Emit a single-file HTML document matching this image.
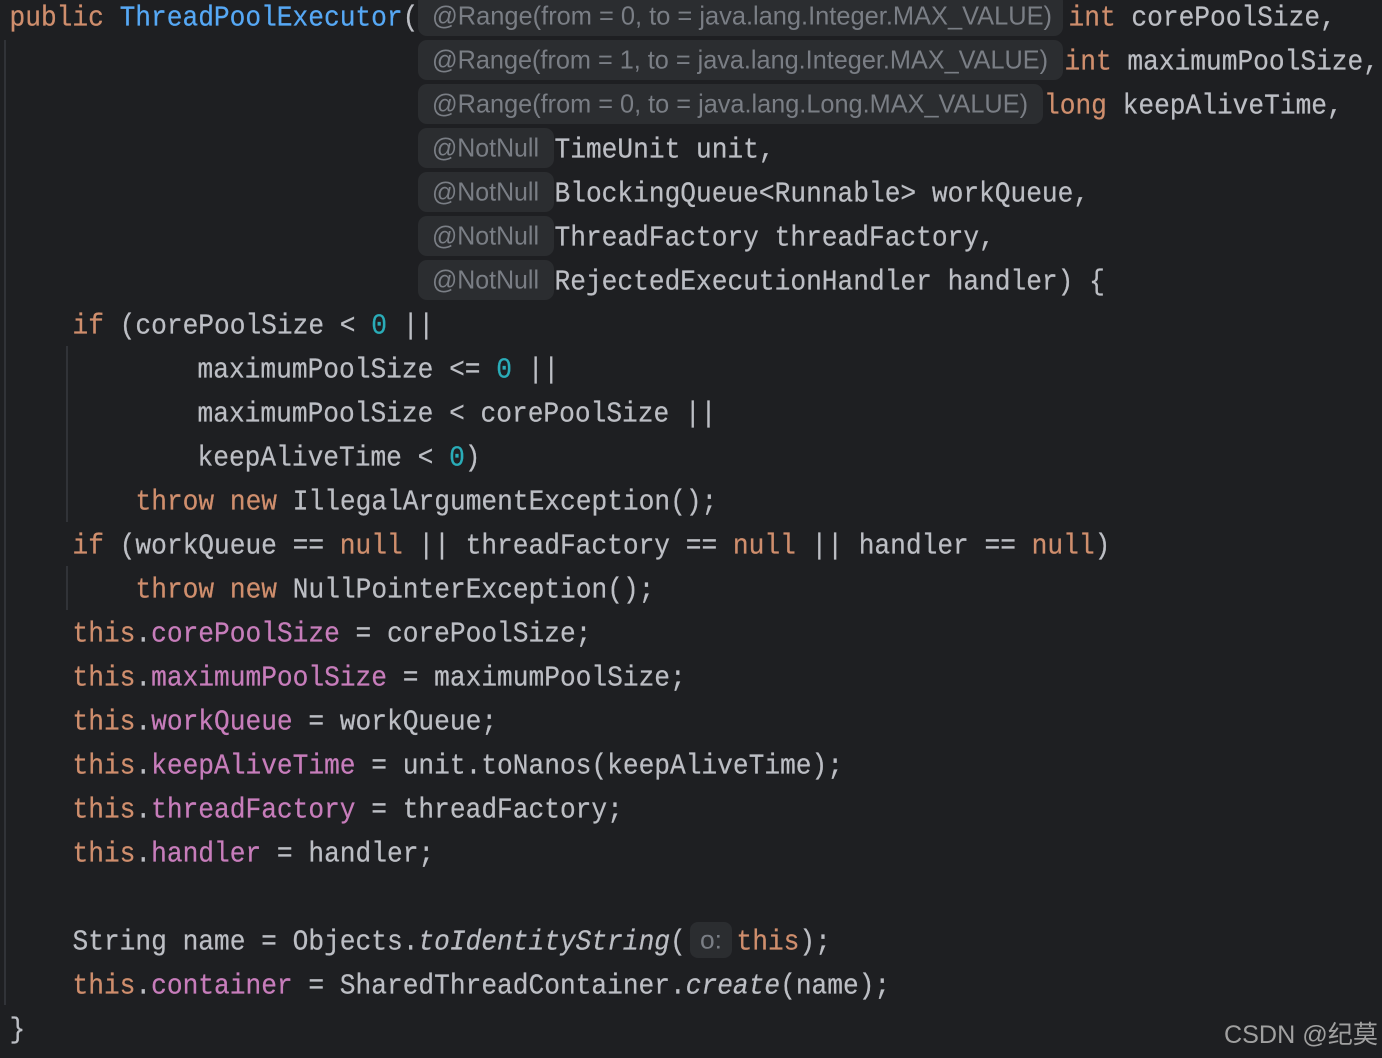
<!DOCTYPE html>
<html>
<head>
<meta charset="utf-8">
<style>
html,body{margin:0;padding:0;background:#1e1f22;width:1382px;height:1058px;overflow:hidden}
svg{position:absolute;left:0;top:0;display:block}
.m{font-family:"Liberation Mono",monospace;font-size:29px;fill:#bcbec4;stroke:#bcbec4;stroke-width:.25px;white-space:pre}
.k{fill:#cf8e6d;stroke:#cf8e6d}.f{fill:#c77dbb;stroke:#c77dbb}.n{fill:#2aacb8;stroke:#2aacb8}.b{fill:#56a8f5;stroke:#56a8f5}.i{font-style:italic}
.h{font-family:"Liberation Sans",sans-serif;font-size:26px;fill:#7a7e85;white-space:pre}
.p{fill:#2b2d30}
.g{fill:#313338}
.w{font-family:"Liberation Sans","Noto Sans CJK SC",sans-serif;font-size:25px;fill:#a0a0a0}
</style>
</head>
<body>
<svg width="1382" height="1058" viewBox="0 0 1382 1058" xmlns="http://www.w3.org/2000/svg">
<rect class="g" x="4" y="40" width="2" height="965"/>
<rect class="g" x="66" y="346" width="2" height="176"/>
<rect class="g" x="66" y="566" width="2" height="44"/>

<rect class="p" x="418" y="-8" width="645" height="44" rx="9"/>
<rect class="p" x="418" y="40" width="645" height="40" rx="9"/>
<rect class="p" x="418" y="84" width="625" height="40" rx="9"/>
<rect class="p" x="418" y="128" width="136" height="40" rx="9"/>
<rect class="p" x="418" y="172" width="136" height="40" rx="9"/>
<rect class="p" x="418" y="216" width="136" height="40" rx="9"/>
<rect class="p" x="418" y="260" width="136" height="40" rx="9"/>
<rect class="p" x="690" y="922" width="42" height="36" rx="8"/>

<text class="h" x="432" y="24.5" textLength="620" lengthAdjust="spacingAndGlyphs">@Range(from = 0, to = java.lang.Integer.MAX_VALUE)</text>
<text class="h" x="432" y="68.5" textLength="616" lengthAdjust="spacingAndGlyphs">@Range(from = 1, to = java.lang.Integer.MAX_VALUE)</text>
<text class="h" x="432" y="112.5" textLength="596" lengthAdjust="spacingAndGlyphs">@Range(from = 0, to = java.lang.Long.MAX_VALUE)</text>
<text class="h" x="432" y="156.5" textLength="107" lengthAdjust="spacingAndGlyphs">@NotNull</text>
<text class="h" x="432" y="200.5" textLength="107" lengthAdjust="spacingAndGlyphs">@NotNull</text>
<text class="h" x="432" y="244.5" textLength="107" lengthAdjust="spacingAndGlyphs">@NotNull</text>
<text class="h" x="432" y="288.5" textLength="107" lengthAdjust="spacingAndGlyphs">@NotNull</text>
<text class="h" x="700" y="948.5" textLength="22" lengthAdjust="spacingAndGlyphs">o:</text>

<text class="m" transform="translate(9.5,25.5) scale(.9042,1)"><tspan class="k">public</tspan> <tspan class="b">ThreadPoolExecutor</tspan>(</text>
<text class="m" transform="translate(1068.5,25.5) scale(.9042,1)"><tspan class="k">int</tspan> corePoolSize,</text>
<text class="m" transform="translate(1064.5,69.5) scale(.9042,1)"><tspan class="k">int</tspan> maximumPoolSize,</text>
<text class="m" transform="translate(1044,113.5) scale(.9042,1)"><tspan class="k">long</tspan> keepAliveTime,</text>
<text class="m" transform="translate(554.5,157.5) scale(.9042,1)">TimeUnit unit,</text>
<text class="m" transform="translate(554.5,201.5) scale(.9042,1)">BlockingQueue&lt;Runnable&gt; workQueue,</text>
<text class="m" transform="translate(554.5,245.5) scale(.9042,1)">ThreadFactory threadFactory,</text>
<text class="m" transform="translate(554.5,289.5) scale(.9042,1)">RejectedExecutionHandler handler) {</text>
<text class="m" transform="translate(72.5,333.5) scale(.9042,1)"><tspan class="k">if</tspan> (corePoolSize &lt; <tspan class="n">0</tspan> ||</text>
<text class="m" transform="translate(197.5,377.5) scale(.9042,1)">maximumPoolSize &lt;= <tspan class="n">0</tspan> ||</text>
<text class="m" transform="translate(197.5,421.5) scale(.9042,1)">maximumPoolSize &lt; corePoolSize ||</text>
<text class="m" transform="translate(197.5,465.5) scale(.9042,1)">keepAliveTime &lt; <tspan class="n">0</tspan>)</text>
<text class="m" transform="translate(135.5,509.5) scale(.9042,1)"><tspan class="k">throw</tspan> <tspan class="k">new</tspan> IllegalArgumentException();</text>
<text class="m" transform="translate(72.5,553.5) scale(.9042,1)"><tspan class="k">if</tspan> (workQueue == <tspan class="k">null</tspan> || threadFactory == <tspan class="k">null</tspan> || handler == <tspan class="k">null</tspan>)</text>
<text class="m" transform="translate(135.5,597.5) scale(.9042,1)"><tspan class="k">throw</tspan> <tspan class="k">new</tspan> NullPointerException();</text>
<text class="m" transform="translate(72.5,641.5) scale(.9042,1)"><tspan class="k">this</tspan>.<tspan class="f">corePoolSize</tspan> = corePoolSize;</text>
<text class="m" transform="translate(72.5,685.5) scale(.9042,1)"><tspan class="k">this</tspan>.<tspan class="f">maximumPoolSize</tspan> = maximumPoolSize;</text>
<text class="m" transform="translate(72.5,729.5) scale(.9042,1)"><tspan class="k">this</tspan>.<tspan class="f">workQueue</tspan> = workQueue;</text>
<text class="m" transform="translate(72.5,773.5) scale(.9042,1)"><tspan class="k">this</tspan>.<tspan class="f">keepAliveTime</tspan> = unit.toNanos(keepAliveTime);</text>
<text class="m" transform="translate(72.5,817.5) scale(.9042,1)"><tspan class="k">this</tspan>.<tspan class="f">threadFactory</tspan> = threadFactory;</text>
<text class="m" transform="translate(72.5,861.5) scale(.9042,1)"><tspan class="k">this</tspan>.<tspan class="f">handler</tspan> = handler;</text>
<text class="m" transform="translate(72.5,949.5) scale(.9042,1)">String name = Objects.<tspan class="i">toIdentityString</tspan>(</text>
<text class="m" transform="translate(736.5,949.5) scale(.9042,1)"><tspan class="k">this</tspan>);</text>
<text class="m" transform="translate(72.5,993.5) scale(.9042,1)"><tspan class="k">this</tspan>.<tspan class="f">container</tspan> = SharedThreadContainer.<tspan class="i">create</tspan>(name);</text>
<text class="m" transform="translate(9.5,1037.5) scale(.9042,1)">}</text>

<text class="w" x="1224" y="1043" textLength="154" lengthAdjust="spacingAndGlyphs">CSDN @纪莫</text>
</svg>
</body>
</html>
